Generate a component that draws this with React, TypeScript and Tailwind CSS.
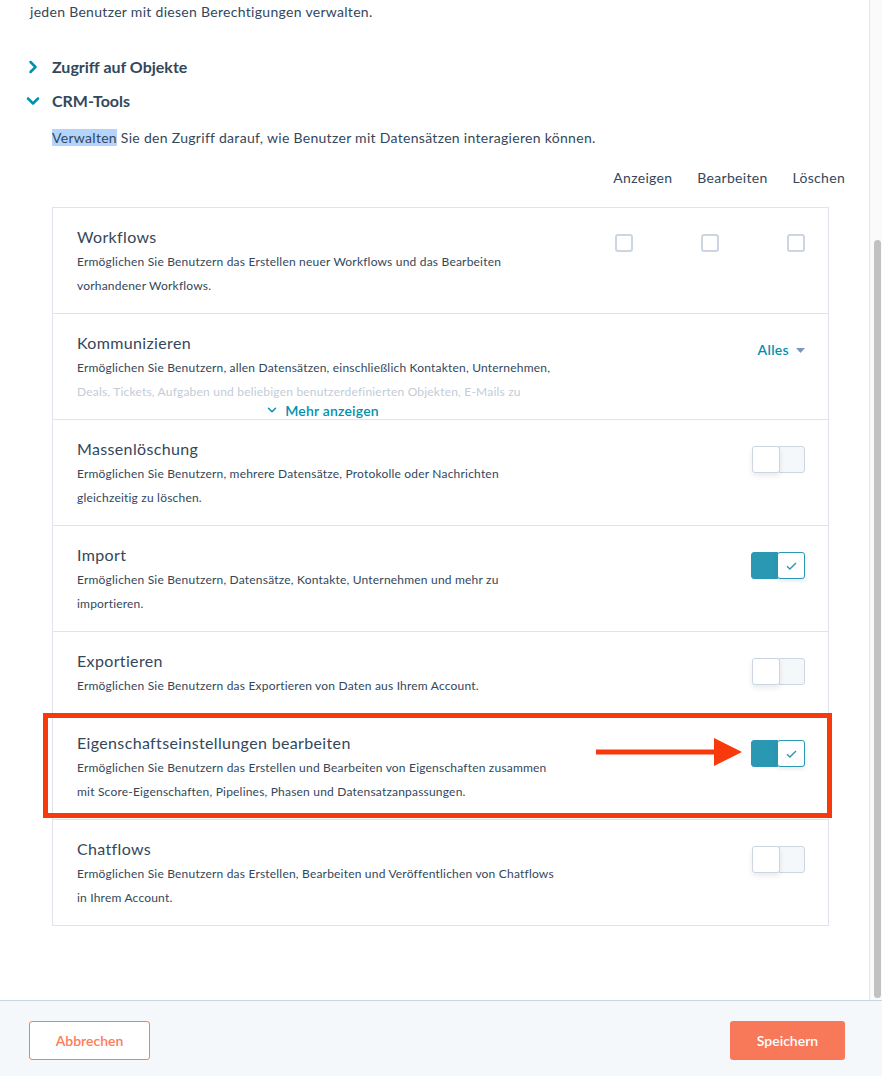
import { ChevronDown, ChevronRight } from 'lucide-react';

type Control = 'checkboxes' | 'alles' | 'off' | 'on';

interface Row {
  title: string;
  lines: string[];
  control: Control;
  highlight?: boolean;
}

const rows: Row[] = [
  {
    title: 'Workflows',
    lines: ['Ermöglichen Sie Benutzern das Erstellen neuer Workflows und das Bearbeiten', 'vorhandener Workflows.'],
    control: 'checkboxes',
  },
  {
    title: 'Kommunizieren',
    lines: [
      'Ermöglichen Sie Benutzern, allen Datensätzen, einschließlich Kontakten, Unternehmen,',
      'Deals, Tickets, Aufgaben und beliebigen benutzerdefinierten Objekten, E-Mails zu',
    ],
    control: 'alles',
  },
  {
    title: 'Massenlöschung',
    lines: ['Ermöglichen Sie Benutzern, mehrere Datensätze, Protokolle oder Nachrichten', 'gleichzeitig zu löschen.'],
    control: 'off',
  },
  {
    title: 'Import',
    lines: ['Ermöglichen Sie Benutzern, Datensätze, Kontakte, Unternehmen und mehr zu', 'importieren.'],
    control: 'on',
  },
  {
    title: 'Exportieren',
    lines: ['Ermöglichen Sie Benutzern das Exportieren von Daten aus Ihrem Account.'],
    control: 'off',
  },
  {
    title: 'Eigenschaftseinstellungen bearbeiten',
    lines: [
      'Ermöglichen Sie Benutzern das Erstellen und Bearbeiten von Eigenschaften zusammen',
      'mit Score-Eigenschaften, Pipelines, Phasen und Datensatzanpassungen.',
    ],
    control: 'on',
    highlight: true,
  },
  {
    title: 'Chatflows',
    lines: [
      'Ermöglichen Sie Benutzern das Erstellen, Bearbeiten und Veröffentlichen von Chatflows',
      'in Ihrem Account.',
    ],
    control: 'off',
  },
];

function Toggle({ on }: { on: boolean }) {
  if (on) {
    return (
      <div className="flex h-[27px] w-[54px]">
        <div className="w-[27px] rounded-l-[3px] border border-[#2a98b3] bg-[#2a98b3]" />
        <div className="-ml-[1px] flex w-[28px] items-center justify-center rounded-[3px] border border-[#2a98b3] bg-white shadow-[0_2px_4px_rgba(45,62,80,0.12)]">
          <svg width="11" height="8" viewBox="0 0 11 8" fill="none">
            <path d="M1 4.2 3.9 7 10 1" stroke="#2a98b3" strokeWidth="1.4" />
          </svg>
        </div>
      </div>
    );
  }
  return (
    <div className="flex h-[27px] w-[53px]">
      <div className="z-10 w-[28px] rounded-[3px] border border-[#cbd6e2] bg-white shadow-[0_3px_5px_rgba(45,62,80,0.1)]" />
      <div className="-ml-[1px] w-[26px] rounded-r-[3px] border border-[#cbd6e2] bg-[#f5f8fa]" />
    </div>
  );
}

function Checkbox() {
  return <div className="h-[18px] w-[18px] rounded-[3px] border-2 border-[#cbd6e2] bg-white" />;
}

function PermissionRow({ row, last }: { row: Row; last: boolean }) {
  const isComm = row.control === 'alles';
  return (
    <div className={`relative flex justify-between pl-6 pr-[23px] ${last ? '' : 'border-b border-[#dfe3eb]'}`}>
      <div className={`w-[490px] ${isComm ? 'pt-[18px]' : 'pt-[18px] pb-[15px]'}`}>
        <div className="text-[16px] leading-[22px] tracking-[0.35px] text-[#33475b]">{row.title}</div>
        <div className="mt-[2px] whitespace-nowrap text-[12px] leading-[24px] tracking-[0.2px] text-[#33475b]">
          {row.lines.map((l, i) => (
            <div key={i} className={isComm && i === 1 ? 'text-[#c3ccd6]' : ''}>
              {l}
            </div>
          ))}
        </div>
        {isComm && (
          <div className="-mt-[3px] flex h-[18px] items-center justify-center gap-[6px] text-[14px] font-semibold tracking-[0.2px] text-[#0091ae]">
            <ChevronDown size={14} strokeWidth={2.5} />
            Mehr anzeigen
          </div>
        )}
      </div>
      <div className="pt-[26px]">
        {row.control === 'checkboxes' && (
          <div className="flex gap-[68px]">
            <Checkbox />
            <Checkbox />
            <Checkbox />
          </div>
        )}
        {row.control === 'alles' && (
          <div className="flex items-center gap-[7px] text-[14px] font-semibold leading-[20px] tracking-[0.3px] text-[#0091ae]">
            Alles
            <svg width="9" height="5" viewBox="0 0 9 5">
              <path d="M0 0h9L4.5 5z" fill="#7c98b6" />
            </svg>
          </div>
        )}
        {row.control === 'off' && <Toggle on={false} />}
        {row.control === 'on' && (
          <div className="flex items-center">
            {row.highlight && (
              <svg className="absolute left-[543px] top-[24px]" width="147" height="28" viewBox="0 0 147 28">
                <rect x="0" y="11.5" width="120" height="5" fill="#f8390c" />
                <path d="M118 0 146 14 118 28z" fill="#f8390c" />
              </svg>
            )}
            <Toggle on />
          </div>
        )}
      </div>
      {row.highlight && (
        <div className="pointer-events-none absolute -left-[10px] -right-[4px] -top-[1px] bottom-[1px] border-[5px] border-[#f8390c]" />
      )}
    </div>
  );
}

export default function App() {
  return (
    <div className="flex h-[1076px] w-[882px] flex-col overflow-hidden bg-white font-[Lato,'Noto_Sans',sans-serif] text-[#33475b]">
      <div className="flex min-h-0 flex-1">
        <main className="min-w-0 flex-1 overflow-hidden">
          <p className="pl-[30px] text-[14px] leading-[24px] tracking-[0.3px]">
            jeden Benutzer mit diesen Berechtigungen verwalten.
          </p>

          <div className="mt-[31px] flex items-center gap-[7px] pl-[21px]">
            <div className="flex w-[24px] justify-center text-[#0091ae]">
              <ChevronRight size={20} strokeWidth={3} />
            </div>
            <span className="text-[16px] font-bold leading-[24px]">Zugriff auf Objekte</span>
          </div>
          <div className="mt-[10px] flex items-center gap-[7px] pl-[21px]">
            <div className="flex w-[24px] justify-center text-[#0091ae]">
              <ChevronDown size={20} strokeWidth={3} />
            </div>
            <span className="text-[16px] font-bold leading-[24px]">CRM-Tools</span>
          </div>

          <p className="mt-[13px] pl-[52px] text-[14px] leading-[24px] tracking-[0.3px]">
            <span className="bg-[#b3d4fc]">Verwalten</span> Sie den Zugriff darauf, wie Benutzer mit Datensätzen interagieren können.
          </p>

          <div className="mt-[16px] flex justify-end gap-[25px] pr-[24px] text-[14px] leading-[24px] tracking-[0.3px]">
            <span>Anzeigen</span>
            <span>Bearbeiten</span>
            <span>Löschen</span>
          </div>

          <div className="ml-[52px] mr-[40px] mt-[17px] border border-[#dfe3eb]">
            {rows.map((r, i) => (
              <PermissionRow key={r.title} row={r} last={i === rows.length - 1} />
            ))}
          </div>
        </main>
        <div className="flex w-[13px] flex-col border-l border-[#e6e6e6] bg-[#fafafa] pb-[2px] pl-[4px] pr-[1px] pt-[240px]">
          <div className="flex-1 rounded-full bg-[#c1c1c1]" />
        </div>
      </div>
      <footer className="flex h-[76px] items-start justify-between border-t border-[#cbd6e2] bg-[#f5f8fa] pl-[29px] pr-[37px] pt-[20px]">
        <button className="h-[39px] w-[121px] rounded-[3px] border border-[#ff7a59] bg-white text-[14px] font-semibold text-[#ff7a59]">
          Abbrechen
        </button>
        <button className="h-[39px] w-[115px] rounded-[3px] bg-[#f8795a] text-[14px] font-semibold text-white">
          Speichern
        </button>
      </footer>
    </div>
  );
}
